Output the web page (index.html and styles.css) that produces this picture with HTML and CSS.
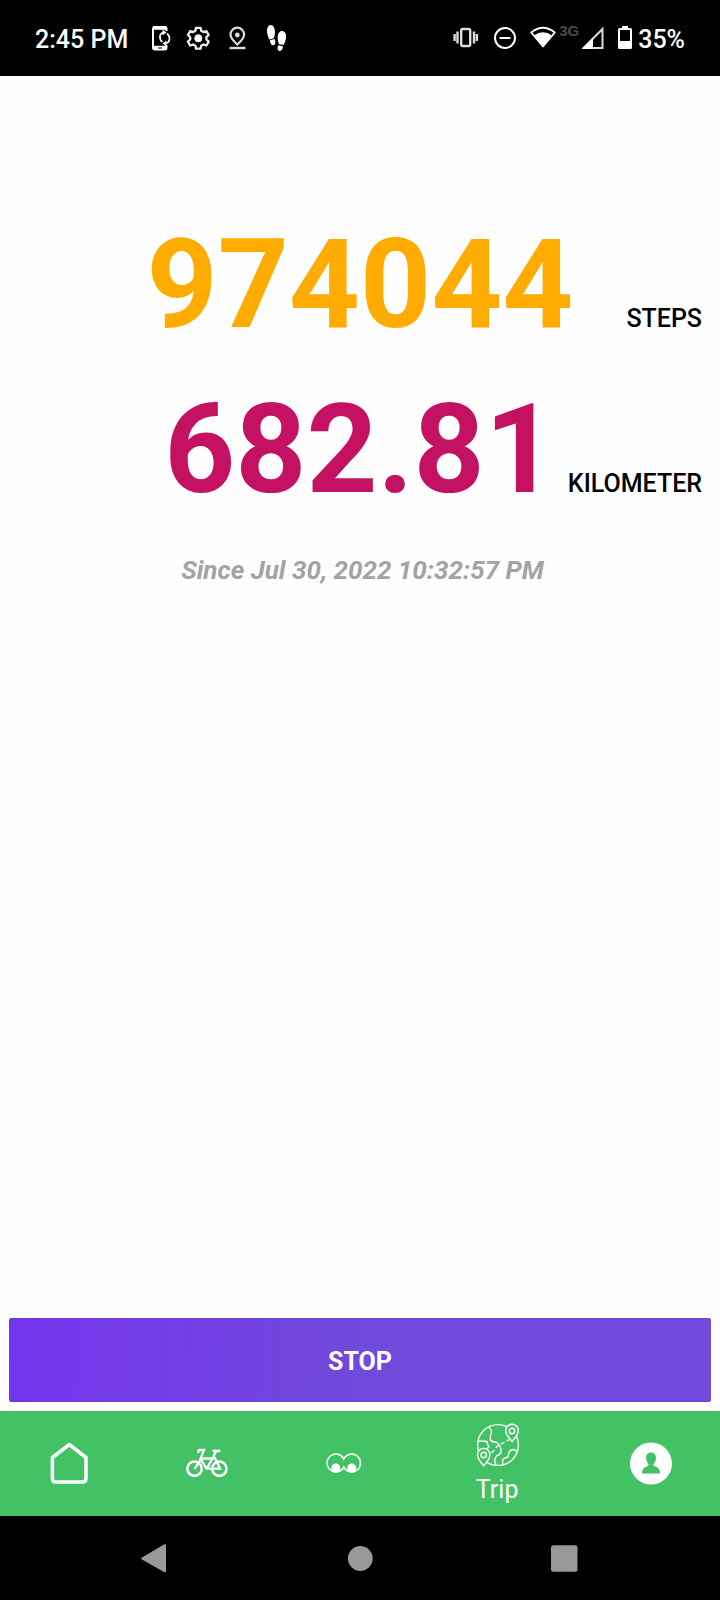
FILE: index.html
```html
<!DOCTYPE html>
<html lang="en">
<head>
  <meta charset="UTF-8">
  <meta name="viewport" content="width=device-width, initial-scale=1.0">
  <title>Trip</title>
  <link rel="stylesheet" href="styles.css">
</head>
<body>
  <header class="status-bar">
    <div class="status-left">
      <span class="status-text">2:45 PM</span>
      <div class="notifications">
        <svg width="28" height="28" viewBox="0 0 28 28" fill="none" stroke="#fff">
          <path d="M18.500 7V5Q18.500 3 16.500 3H7Q5 3 5 5V23.500Q5 25.500 7 25.500H16.500Q18.500 25.500 18.500 23.500V21" stroke-width="2"/>
          <path d="M5 4h13.500M5 23.500h13.500" stroke-width="3.500"/>
          <path d="M10 24h4" stroke="#000" stroke-width="1"/>
          <path d="M15 8.500Q11.500 10 12 14Q12.500 17 14.500 18M18 19.500Q21.800 18 21.500 14Q21 11 19 9.500" stroke-width="1.700"/>
          <path d="M14.500 5.500l4 3l-4 3zM18.500 16.500l-4 3l4 3z" fill="#fff" stroke="none"/>
        </svg>
        <svg width="28" height="28" viewBox="0 0 28 28" fill="none" stroke="#eee">
          <path d="M10 3.800h4.600l.6 3 2.300 1.300 2.900-1 2.300 3.900-2.300 2.100v2.400l2.300 2.100-2.300 3.900-2.900-1-2.300 1.300-.6 2.900h-4.600l-.6-2.900-2.300-1.300-2.900 1-2.300-3.900 2.300-2.100v-2.400l-2.300-2.100 2.300-3.900 2.900 1 2.300-1.300z" stroke-width="2.300" stroke-linejoin="round"/>
          <circle cx="12.300" cy="14.300" r="3.600" fill="#fff"/>
        </svg>
        <svg width="28" height="28" viewBox="0 0 28 28" fill="none" stroke="#ddd">
          <path d="M13.300 20.500Q6.500 14.500 6.500 10.500A6.800 6.800 0 0 1 20.100 10.500Q20.100 14.500 13.300 20.500z" stroke-width="2.200"/>
          <circle cx="13.300" cy="11" r="2.400" fill="#ddd" stroke="none"/>
          <path d="M5.500 24h16" stroke-width="2.400"/>
        </svg>
        <svg width="28" height="28" viewBox="0 0 28 28" fill="#fff">
          <path d="M8.500 1C11.500 1 13 4.500 13 8.500C13 11 12 13 11.800 14.200L7.500 15.500C6 13 5 10 5 7C5 3.500 6.500 1 8.500 1z"/>
          <path d="M8 16.300l4.500-1.200C14 18 13.500 21 11.500 21.300C9.500 21.500 8 19.500 8 16.300z"/>
          <path d="M20 7C23 7 24.500 10 24 14C23.700 17 22.500 19 21.500 21L16.800 20C16.500 18 15.500 16 15.700 13C16 9.500 17.500 7 20 7z"/>
          <path d="M16.300 21.200l4.700 1C20.800 25.500 19 27.300 17.300 27C15.300 26.500 15 24 16.300 21.200z"/>
        </svg>
      </div>
    </div>
    <div class="status-right">
      <svg width="28" height="28" viewBox="0 0 28 28" fill="none" stroke="#ddd">
        <rect x="9.200" y="5" width="9" height="17" rx="1.500" stroke-width="2.400"/>
        <path d="M5.500 7.500v12M22 7.500v12M2.600 10v7M24.900 10v7" stroke-width="2.400"/>
      </svg>
      <svg width="26" height="28" viewBox="0 0 26 28" fill="none" stroke="#fff" stroke-width="2">
        <circle cx="13" cy="14" r="10"/>
        <path d="M7.500 14h11"/>
      </svg>
      <div class="signal">
        <svg width="26" height="28" viewBox="0 0 26 28" fill="none">
          <path d="M1.200 8.500Q13-1 24.800 8.500L13 22.500z" stroke="#fff" stroke-width="1.800" stroke-linejoin="round"/>
          <path d="M4 11.500Q13 5 22 11.500L13 23z" fill="#fff"/>
        </svg>
        <span class="network">3G</span>
        <svg width="22" height="28" viewBox="0 0 22 28">
          <path d="M1.500 24L20.500 5V24z" fill="none" stroke="#ddd" stroke-width="2"/>
          <path d="M0 25L11 14V25z" fill="#fff"/>
        </svg>
      </div>
      <div class="battery">
        <svg width="18" height="28" viewBox="0 0 18 28" fill="none">
          <path d="M6 2h6v2H6z" fill="#fff"/>
          <rect x="3" y="5" width="12" height="19" rx="0.500" stroke="#fff" stroke-width="2"/>
          <path d="M3 17h12v7H3z" fill="#fff"/>
        </svg>
        <span class="status-text">35%</span>
      </div>
    </div>
  </header>

  <main class="content">
    <div class="counter">
      <span class="value steps">974044</span>
      <span class="unit">STEPS</span>
    </div>
    <div class="counter">
      <span class="value distance">682.81</span>
      <span class="unit">KILOMETER</span>
    </div>
    <p class="since">Since Jul 30, 2022 10:32:57 PM</p>
    <button type="button" class="stop">STOP</button>
  </main>

  <nav class="tabs">
    <a class="tab" href="#home" aria-label="Home">
      <svg width="44" height="44" viewBox="0 0 44 44" fill="none" stroke="#fff" stroke-width="3.500" stroke-linejoin="round">
        <path d="M22.300 2.500L39 15.500V36.500Q39 40 35.500 40H8.900Q5.400 40 5.400 36.500V15.500z"/>
      </svg>
    </a>
    <a class="tab" href="#bike" aria-label="Bike">
      <svg width="44" height="44" viewBox="0 0 44 44" fill="none" stroke="#fff">
        <circle cx="10.500" cy="26.700" r="7.200" stroke-width="2.600"/>
        <circle cx="35.300" cy="26.700" r="7.200" stroke-width="2.600"/>
        <path d="M10.500 27L15.500 19.500L20 8H15.500Q13.500 8 14.500 11M17.300 16.500H31.500M17 17.500L22.500 26.700H36L30.500 15M32 9.500L22.800 26.700" stroke-width="2.300"/>
        <path d="M28.500 8.900H36.300" stroke-width="2.600"/>
      </svg>
    </a>
    <a class="tab" href="#watch" aria-label="Watch">
      <svg width="44" height="44" viewBox="0 0 44 44" fill="none" stroke="#fff" stroke-width="1.500">
        <path d="M22.800 17A8.800 9 0 1 0 22.800 25A8.800 9 0 1 0 22.800 17z"/>
        <circle cx="14.800" cy="26" r="4.500" fill="#fff" stroke="none"/>
        <circle cx="30.700" cy="26" r="4.500" fill="#fff" stroke="none"/>
      </svg>
    </a>
    <a class="tab active" href="#trip">
      <svg width="44" height="44" viewBox="-1 0 44 44" fill="none" stroke="#fff" stroke-width="1.400">
        <circle cx="22" cy="22" r="20.400"/>
        <path d="M2 18.300H9.500Q11.500 18.500 11.500 21L13 23.500L11 26"/>
        <path d="M12.500 4Q15.700 6 15.500 9.500Q13.500 13 14.500 17Q16 19 20 19Q25.500 23 25 29Q24.500 31.500 20.500 33L18.500 37L20 42"/>
        <path d="M27 41Q25.500 37 28.500 35Q32.500 35 32.500 31.500Q33 27 37 26.500Q40 26.500 40.500 29"/>
        <path d="M15.700 30L21.500 23L33.500 16.500" stroke-dasharray="4 2.500"/>
        <path class="pin" d="M36 18.500Q29.700 11.500 29.700 7.500A6.300 6.300 0 0 1 42.300 7.500Q42.300 11.500 36 18.500z"/>
        <circle cx="36" cy="8" r="2.700"/>
        <path class="pin" d="M7.700 42.700Q1.400 35.700 1.400 31.700A6.300 6.300 0 0 1 14 31.700Q14 35.700 7.700 42.700z"/>
        <circle cx="7.700" cy="32" r="2.700"/>
      </svg>
      <span>Trip</span>
    </a>
    <a class="tab" href="#profile" aria-label="Profile">
      <svg width="44" height="44" viewBox="0 0 44 44">
        <circle cx="22" cy="21.500" r="21" fill="#fff"/>
        <path class="person" d="M22 10.500C25.500 10.500 27 13 27 16C27 19 25.500 21 24.300 22.500Q24.300 24 26.500 24.500Q31 26 31 31.500H13Q13 26 17.500 24.500Q19.700 24 19.700 22.500C18.500 21 17 19 17 16C17 13 18.500 10.500 22 10.500z"/>
      </svg>
    </a>
  </nav>

  <footer class="system-nav">
    <button type="button" aria-label="Back">
      <svg width="28" height="30" viewBox="0 0 28 30"><path d="M1 14.500L23 1.500Q25 0.800 25 2.500V28Q25 29.700 23 29L1 16.500Q-0.500 15.500 1 14.500z"/></svg>
    </button>
    <button type="button" aria-label="Home">
      <svg width="28" height="30" viewBox="0 0 28 30"><circle cx="14.300" cy="15.500" r="12.400"/></svg>
    </button>
    <button type="button" aria-label="Recent apps">
      <svg width="28" height="30" viewBox="0 0 28 30"><rect x="0" y="2.300" width="26.500" height="26.500" rx="2.500"/></svg>
    </button>
  </footer>
</body>
</html>
```
FILE: styles.css
```css
* {
  box-sizing: border-box;
}
body {
  display: flex;
  flex-direction: column;
  min-height: 100vh;
  margin: 0;
  font-family: Roboto, sans-serif;
  background-color: #fefefe;
}
svg {
  display: block;
  flex-shrink: 0;
}
button {
  border: none;
  font-family: inherit;
  cursor: pointer;
}

/* Status bar */
.status-bar {
  display: flex;
  justify-content: space-between;
  height: 76px;
  padding: 0 35px;
  background-color: #000;
  color: #fff;
}
.status-left,
.status-right,
.notifications,
.signal,
.battery {
  display: flex;
  align-items: center;
}
.status-left {
  gap: 20px;
}
.status-right {
  gap: 12px;
}
.notifications {
  gap: 10px;
}
.signal {
  gap: 3px;
}
.battery {
  gap: 4px;
}
.status-text {
  padding-top: 4px;
  font-size: 25px;
  font-weight: 500;
  line-height: 30px;
}
.network {
  align-self: flex-start;
  color: #4a4a4a;
  font-family: "Liberation Sans", sans-serif;
  font-size: 15px;
  font-weight: bold;
  line-height: 14px;
}

/* Counters */
.content {
  display: flex;
  flex: 1;
  flex-direction: column;
  padding: 126px 9px 9px;
}
.counter {
  display: grid;
  grid-template-columns: 1fr auto 1fr;
  align-items: baseline;
  padding-right: 9px;
  padding-left: 9px;
}
.value {
  grid-column: 2;
  font-size: 124px;
  font-weight: bold;
  line-height: 165px;
}
.steps {
  color: #ffab00;
}
.distance {
  color: #c51162;
}
.unit {
  justify-self: end;
  color: #000;
  font-size: 25px;
  font-weight: 500;
}
.since {
  margin: 18px 0 0;
  padding-left: 5px;
  color: #a3a3a3;
  font-size: 26px;
  font-style: italic;
  font-weight: bold;
  line-height: 40px;
  text-align: center;
}
.stop {
  height: 84px;
  margin-top: auto;
  padding: 2px 0 0;
  border-radius: 2px;
  background: linear-gradient(95deg, #7434ec, #7149db 50%);
  color: #fff;
  font-size: 25px;
  font-weight: bold;
}

/* Bottom tabs */
.tabs {
  display: flex;
  height: 105px;
  background-color: #43c165;
}
.tab {
  display: flex;
  flex: 4;
  flex-direction: column;
  align-items: center;
  justify-content: center;
  gap: 8px;
  color: #fff;
  font-size: 25px;
  line-height: 30px;
  text-decoration: none;
}
.tab.active {
  flex: 5;
}
.pin,
.person {
  fill: #43c165;
}

/* System navigation */
.system-nav {
  display: flex;
  height: 84px;
  padding: 0 52px;
  background-color: #000;
}
.system-nav button {
  display: flex;
  flex: 1;
  align-items: center;
  justify-content: center;
  padding: 0;
  background: none;
}
.system-nav svg {
  fill: #999;
}
```
